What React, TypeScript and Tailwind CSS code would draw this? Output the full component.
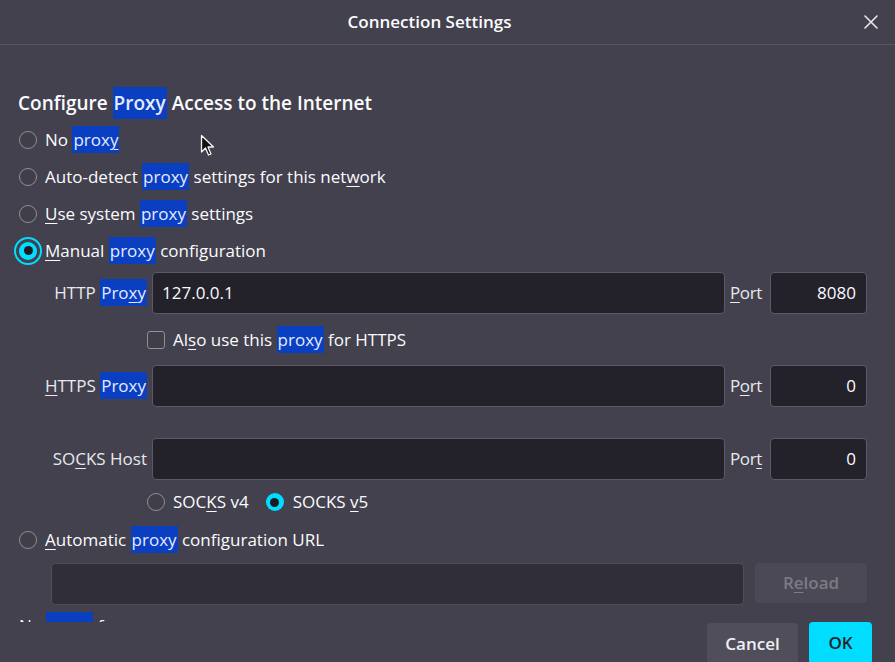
import React from 'react';

const Hl: React.FC<{ children: React.ReactNode }> = ({ children }) => (
  <span className="bg-[#0a3fc2] text-[#e4ebff] px-[1px] py-[2px]">{children}</span>
);

const U: React.FC<{ children: React.ReactNode }> = ({ children }) => (
  <span className="underline decoration-1 underline-offset-[3px]">{children}</span>
);

const Radio: React.FC<{ checked?: boolean; focus?: boolean }> = ({ checked, focus }) => (
  <span className="relative inline-flex w-[18px] h-[18px] shrink-0">
    {focus && (
      <span className="absolute -inset-[5px] rounded-full border-2 border-[#00ddff]" />
    )}
    {checked ? (
      <span className="w-[18px] h-[18px] rounded-full bg-[#00ddff] flex items-center justify-center">
        <span className="w-[9px] h-[9px] rounded-full bg-[#1c1b22]" />
      </span>
    ) : (
      <span className="w-[18px] h-[18px] rounded-full border border-[#8f8f9d] bg-[#3f3e49]" />
    )}
  </span>
);

const Input: React.FC<{ value?: string; right?: boolean; className?: string }> = ({ value, right, className }) => (
  <div
    className={
      'h-[42px] rounded-[4px] border border-[#5b5a66] bg-[#23222b] flex items-center text-[#fbfbfe] ' +
      (right ? 'justify-end pr-[10px] ' : 'pl-[9px] ') +
      (className || '')
    }
  >
    {value}
  </div>
);

const ProxyRow: React.FC<{ label: React.ReactNode; value?: string; port: string; portLabel: React.ReactNode }> = ({
  label,
  value,
  port,
  portLabel,
}) => (
  <div className="flex items-center gap-[5px] h-[42px]">
    <div className="w-[129px] text-right whitespace-nowrap text-[#e8e8ee]">{label}</div>
    <Input value={value} className="flex-1" />
    <div className="w-[35px] whitespace-nowrap text-[#e8e8ee] tracking-[-0.4px]">{portLabel}</div>
    <Input value={port} right className="w-[97px]" />
  </div>
);

const App: React.FC = () => {
  return (
    <div className="w-[895px] h-[662px] bg-[#42414d] text-[#fbfbfe] overflow-hidden flex flex-col relative font-['Open_Sans',sans-serif] text-[17px]">
      {/* Title bar */}
      <div className="h-[45px] shrink-0 flex items-center border-b border-[#56555f]">
        <div className="flex-1 text-center font-semibold text-[17px] pl-[2px]">Connection Settings</div>
        <div className="w-[38px] flex items-center">
          <svg width="16" height="16" viewBox="0 0 16 16" className="ml-[6px]">
            <path d="M2 2 L14 14 M14 2 L2 14" stroke="#e8e8ee" strokeWidth="1.6" strokeLinecap="round" />
          </svg>
        </div>
      </div>

      {/* Body */}
      <div className="h-[577px] shrink-0 overflow-hidden pl-[18px] pr-[28px] pt-[40px]">
        <div className="h-[36px] flex items-center font-semibold text-[19px]">
          Configure&nbsp;<Hl>Proxy</Hl>&nbsp;Access to the Internet
        </div>

        <div className="h-[37px] flex items-center gap-[8px] pl-[1px]">
          <Radio />
          <span>
            No <Hl>prox<U>y</U></Hl>
          </span>
        </div>
        <div className="h-[37px] flex items-center gap-[8px] pl-[1px]">
          <Radio />
          <span>
            Auto-detect <Hl>proxy</Hl> settings for this net<U>w</U>ork
          </span>
        </div>
        <div className="h-[37px] flex items-center gap-[8px] pl-[1px]">
          <Radio />
          <span>
            <U>U</U>se system <Hl>proxy</Hl> settings
          </span>
        </div>
        <div className="h-[37px] flex items-center gap-[8px] pl-[1px]">
          <Radio checked focus />
          <span>
            <U>M</U>anual <Hl>proxy</Hl> configuration
          </span>
        </div>

        <div className="mt-[3px]">
          <ProxyRow
            label={
              <>
                HTTP <Hl>Pro<U>x</U>y</Hl>
              </>
            }
            value="127.0.0.1"
            port="8080"
            portLabel={
              <>
                <U>P</U>ort
              </>
            }
          />
        </div>

        <div className="h-[51px] flex items-center gap-[8px] ml-[129px]">
          <span className="w-[18px] h-[18px] rounded-[3px] border border-[#8f8f9d] bg-[#3f3e49]" />
          <span>
            Al<U>s</U>o use this <Hl>proxy</Hl> for HTTPS
          </span>
        </div>

        <ProxyRow
          label={
            <>
              <U>H</U>TTPS <Hl>Proxy</Hl>
            </>
          }
          port="0"
          portLabel={
            <>
              P<U>o</U>rt
            </>
          }
        />

        <div className="mt-[31px]">
          <ProxyRow
            label={
              <>
                SO<U>C</U>KS Host
              </>
            }
            port="0"
            portLabel={
              <>
                Por<U>t</U>
              </>
            }
          />
        </div>

        <div className="h-[44px] flex items-center ml-[129px]">
          <Radio />
          <span className="ml-[8px]">
            SOC<U>K</U>S v4
          </span>
          <span className="ml-[17px] flex">
            <Radio checked />
          </span>
          <span className="ml-[9px]">
            SOCKS <U>v</U>5
          </span>
        </div>

        <div className="h-[32px] flex items-center gap-[8px] pl-[1px]">
          <Radio />
          <span>
            <U>A</U>utomatic <Hl>proxy</Hl> configuration URL
          </span>
        </div>

        <div className="mt-[7px] ml-[33px] flex items-start gap-[11px]">
          <div className="flex-1 h-[42px] rounded-[4px] border border-[#4f4e59] bg-[#302f39]" />
          <div className="w-[112px] h-[40px] rounded-[4px] bg-[#4a4955] flex items-center justify-center font-semibold text-[#7c7b85]">
            R<U>e</U>load
          </div>
        </div>

        <div className="mt-[9px] h-[24px] flex items-center pl-[1px]">
          <span>
            No <Hl>proxy</Hl> for
          </span>
        </div>
      </div>

      {/* Footer */}
      <div className="h-[40px] shrink-0 flex justify-end items-start gap-[11px] pr-[23px]">
        <div className="mt-[1px] w-[91px] h-[41px] rounded-[4px] bg-[#4f4e5a] flex items-center justify-center font-semibold text-[#f0f0f4]">
          Cancel
        </div>
        <div className="w-[63px] h-[42px] rounded-[4px] bg-[#00ddff] flex items-center justify-center font-semibold text-[#23222b]">
          OK
        </div>
      </div>

      {/* Mouse pointer */}
      <svg width="16" height="24" viewBox="0 0 16 24" className="absolute left-[200px] top-[134px]">
        <path
          d="M1.5 1.5 L1.5 18 L5.5 14 L8.5 21 L11 20 L8 13 L13.5 13 Z"
          fill="#111"
          stroke="#f4f4f4"
          strokeWidth="1.3"
          strokeLinejoin="round"
        />
      </svg>
    </div>
  );
};

export default App;
